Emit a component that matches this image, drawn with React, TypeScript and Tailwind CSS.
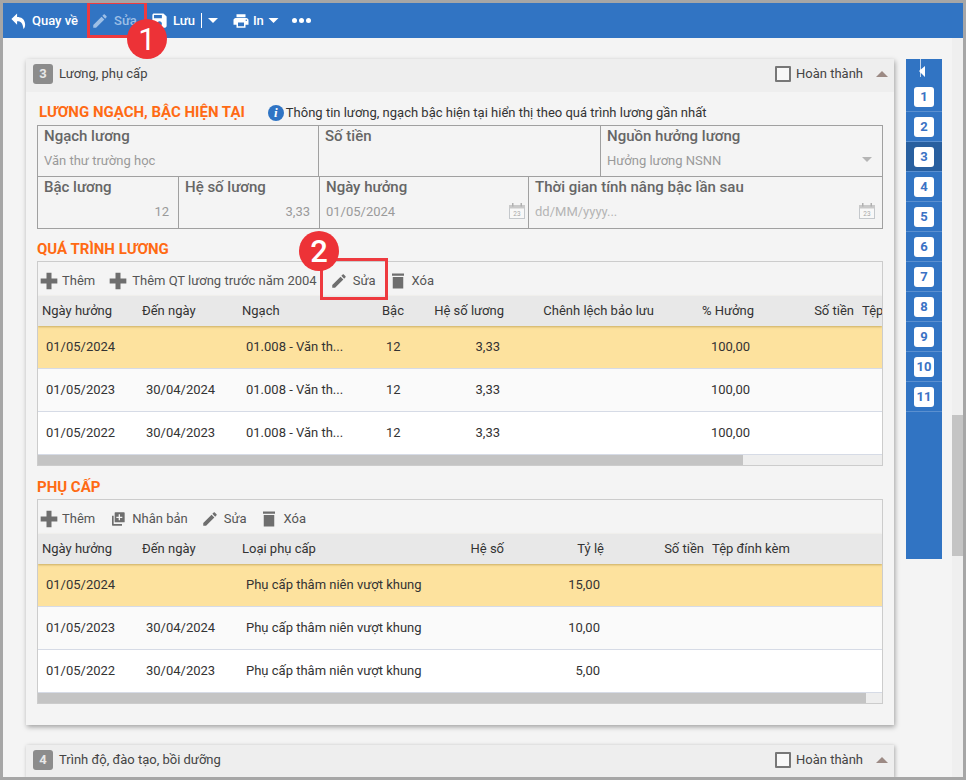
import React from "react";

const P = {
  back: "M10 2 2 10l8 8v-5c5 0 8 2 9 11 2-2 3-5 2-9-1-5-5-8-11-8z",
  pencil: "M3 17.25V21h3.75L17.81 9.94l-3.75-3.75L3 17.25zM20.71 7.04c.39-.39.39-1.02 0-1.41l-2.34-2.34c-.39-.39-1.02-.39-1.41 0l-1.83 1.83 3.75 3.75 1.83-1.83z",
  save: "M17 3H5c-1.11 0-2 .9-2 2v14c0 1.1.89 2 2 2h14c1.1 0 2-.9 2-2V7l-4-4zm-5 16c-1.66 0-3-1.34-3-3s1.34-3 3-3 3 1.34 3 3-1.34 3-3 3zm3-10H5V5h10v4z",
  print: "M19 8H5c-1.66 0-3 1.34-3 3v6h4v4h12v-4h4v-6c0-1.66-1.34-3-3-3zm-3 11H8v-5h8v5zm3-7c-.55 0-1-.45-1-1s.45-1 1-1 1 .45 1 1-.45 1-1 1zm-1-9H6v4h12V3z",
  plus: "M9 2h6v7h7v6h-7v7H9v-7H2V9h7z",
  trash: "M4 2h16v3H4zM5 6.500h14V22H5z",
  copy: "M8 2h13a1 1 0 0 1 1 1v13a1 1 0 0 1-1 1H8a1 1 0 0 1-1-1V3a1 1 0 0 1 1-1zm5 3v3.500H9.500v2H13V14h2v-3.500h3.500v-2H15V5zM3 7h2.500v12.500H18V22H4a1 1 0 0 1-1-1z",
};

function Icon({ d, className }: { d: string; className: string }) {
  return (
    <svg viewBox="0 0 24 24" className={className} fill="currentColor">
      <path d={d} />
    </svg>
  );
}

function Caret({ className }: { className: string }) {
  return (
    <svg viewBox="0 0 10 5" className={className} fill="currentColor">
      <path d="M0 0h10L5 5z" />
    </svg>
  );
}

function CalendarIcon({ className }: { className: string }) {
  return (
    <svg viewBox="0 0 16 16" className={className}>
      <rect x="0.500" y="2.500" width="15" height="13" fill="#f8f8f8" stroke="#c4c8cc" />
      <rect x="0" y="2" width="16" height="3.500" fill="#c9c9c9" />
      <rect x="3" y="0" width="1.500" height="3.500" fill="#b0b0b0" />
      <rect x="11.500" y="0" width="1.500" height="3.500" fill="#b0b0b0" />
      <text x="8" y="13" fontSize="6.500" textAnchor="middle" fill="#a8a8a8" fontFamily="Roboto, sans-serif">23</text>
    </svg>
  );
}

function Badge({ n, className }: { n: string; className: string }) {
  return (
    <div className={`absolute z-20 flex h-10 w-10 items-center justify-center rounded-full bg-[#ed3237] text-[31px] leading-none text-white ${className}`}>
      {n}
    </div>
  );
}

function SectionHeader({ n, title }: { n: string; title: string }) {
  return (
    <div className="flex h-[33px] shrink-0 items-center bg-[#eeeeee] pb-[3px] pl-[7px] pr-[6px]">
      <div className="flex h-5 w-5 items-center justify-center rounded-[3px] bg-[#8c8c8c] text-[13px] font-bold text-[#e8e8e8]">{n}</div>
      <span className="mb-[1px] ml-[6px] text-[13px] text-[#444444]">{title}</span>
      <div className="ml-auto flex items-center">
        <div className="h-4 w-4 rounded-[1px] border-2 border-[#777777] bg-[#f8f8f8]" />
        <span className="mb-[1px] ml-[5px] text-[13px] text-[#444444]">Hoàn thành</span>
        <Caret className="ml-[13px] h-[6px] w-3 rotate-180 text-[#9c8a84]" />
      </div>
    </div>
  );
}

function Field({ label, value, width, valueCls = "", right, children }: { label: string; value: string; width: string; valueCls?: string; right?: boolean; children?: React.ReactNode }) {
  return (
    <div className={`relative h-full border-r border-[#a0a0a0] px-[6px] pt-[1px] last:border-r-0 ${width}`}>
      <div className="text-[15px] font-medium leading-[18px] text-[#666666]">{label}</div>
      <div className={`mt-[7px] text-[13px] leading-[18px] text-[#9a9a9a] ${right ? "pr-[3px] text-right" : ""} ${valueCls}`}>{value}</div>
      {children}
    </div>
  );
}

function ToolItem({ d, label, iconCls = "h-[18px] w-[18px]", gap = "ml-[7px]", className = "" }: { d: string; label: string; iconCls?: string; gap?: string; className?: string }) {
  return (
    <div className={`flex items-center ${className}`}>
      <Icon d={d} className={`text-[#6e6e6e] ${iconCls}`} />
      <span className={`text-[13px] text-[#555555] ${gap}`}>{label}</span>
    </div>
  );
}

type Col = { label: string; right?: boolean };

function DataGrid({ cols, template, rows, thumb, toolbar }: { cols: Col[]; template: string; rows: string[][]; thumb: string; toolbar: React.ReactNode }) {
  return (
    <div className="w-[846px] overflow-hidden border border-[#cccccc]">
      <div className="flex h-[34px] items-center pt-[4px]">{toolbar}</div>
      <div className={`relative grid h-[30px] items-center bg-[#e8e8e8] shadow-[0_1px_2px_rgba(150,120,40,0.5)] ${template}`}>
        {cols.map((c) => (
          <div key={c.label} className={`whitespace-nowrap px-1 text-[13px] text-[#333333] ${c.right ? "text-right" : ""}`}>{c.label}</div>
        ))}
      </div>
      {rows.map((r, i) => (
        <div key={i} className={`grid h-[43px] items-center border-b border-[#d6dbe6] ${template} ${i === 0 ? "bg-[#fde29e]" : i === 1 ? "bg-[#fafafa]" : "bg-white"}`}>
          {r.map((v, j) => (
            <div key={j} className={`whitespace-nowrap px-2 text-[13px] text-[#333333] ${cols[j].right ? "text-right" : ""}`}>{v}</div>
          ))}
        </div>
      ))}
      <div className="h-[10px] bg-[#eeeeee]">
        <div className={`h-full bg-[#c4c4c4] ${thumb}`} />
      </div>
    </div>
  );
}

const salaryCols: Col[] = [
  { label: "Ngày hưởng" },
  { label: "Đến ngày" },
  { label: "Ngạch" },
  { label: "Bậc" },
  { label: "Hệ số lương", right: true },
  { label: "Chênh lệch bảo lưu", right: true },
  { label: "% Hưởng", right: true },
  { label: "Số tiền", right: true },
  { label: "Tệp đính kèm" },
];

const salaryRows = [
  ["01/05/2024", "", "01.008 - Văn th...", "12", "3,33", "", "100,00", "", ""],
  ["01/05/2023", "30/04/2024", "01.008 - Văn th...", "12", "3,33", "", "100,00", "", ""],
  ["01/05/2022", "30/04/2023", "01.008 - Văn th...", "12", "3,33", "", "100,00", "", ""],
];

const allowanceCols: Col[] = [
  { label: "Ngày hưởng" },
  { label: "Đến ngày" },
  { label: "Loại phụ cấp" },
  { label: "Hệ số", right: true },
  { label: "Tỷ lệ", right: true },
  { label: "Số tiền", right: true },
  { label: "Tệp đính kèm" },
];

const allowanceRows = [
  ["01/05/2024", "", "Phụ cấp thâm niên vượt khung", "", "15,00", "", ""],
  ["01/05/2023", "30/04/2024", "Phụ cấp thâm niên vượt khung", "", "10,00", "", ""],
  ["01/05/2022", "30/04/2023", "Phụ cấp thâm niên vượt khung", "", "5,00", "", ""],
];

const navItems = ["1", "2", "3", "4", "5", "6", "7", "8", "9", "10", "11"];

export default function App() {
  return (
    <div className="relative flex h-[780px] w-[966px] flex-col overflow-hidden border-[3px] border-[#a6a6a6] bg-[#f4f4f4] font-['Roboto',sans-serif]">
      {/* toolbar */}
      <div className="flex h-[35px] shrink-0 items-center bg-[#3174c3] pl-[7px] text-[13px] font-medium text-white">
        <Icon d={P.back} className="h-[17px] w-[17px]" />
        <span className="ml-[5px]">Quay về</span>
        <Icon d={P.pencil} className="ml-[13px] h-[18px] w-[18px] text-[#9dbfe6]" />
        <span className="ml-[5px] text-[#9dbfe6]">Sửa</span>
        <Icon d={P.save} className="ml-[13px] h-[19px] w-[19px]" />
        <span className="ml-[4px]">Lưu</span>
        <div className="ml-[6px] h-[15px] w-px bg-white" />
        <Caret className="ml-[6px] h-[5px] w-[10px]" />
        <Icon d={P.print} className="ml-[14px] h-[18px] w-[18px]" />
        <span className="ml-[3px]">In</span>
        <Caret className="ml-[4px] h-[5px] w-[11px]" />
        <div className="ml-[13px] flex gap-[2px]">
          <div className="h-[5px] w-[5px] rounded-full bg-white" />
          <div className="h-[5px] w-[5px] rounded-full bg-white" />
          <div className="h-[5px] w-[5px] rounded-full bg-white" />
        </div>
      </div>

      {/* callouts */}
      <div className="absolute left-[84px] top-[-2px] z-10 h-[37px] w-[60px] border-[3px] border-[#ee3a3f]" />
      <Badge n="1" className="left-[124px] top-[16px]" />
      <div className="absolute left-[317px] top-[255px] z-10 h-[42px] w-[68px] border-[3px] border-[#ee3a3f]" />
      <Badge n="2" className="left-[296px] top-[228px] font-medium" />

      <div className="flex min-h-0 flex-1">
        {/* content */}
        <div className="w-[891px] shrink-0 pl-[23px] pt-[21px]">
          <div className="w-[868px] bg-[#f4f4f4] shadow-[1px_2px_5px_rgba(0,0,0,0.35)]">
            <SectionHeader n="3" title="Lương, phụ cấp" />
            <div className="pb-[21px] pl-[11px]">
              <div className="flex h-[33px] items-center pl-[2px] pt-[8px]">
                <h2 className="text-[15px] font-bold text-[#ff6a13]">LƯƠNG NGẠCH, BẬC HIỆN TẠI</h2>
                <div className="ml-[23px] flex h-4 w-4 items-center justify-center rounded-full bg-[#2f74c4] font-['Liberation_Serif',serif] text-[13px] font-bold italic text-white">i</div>
                <span className="ml-[2px] text-[13px] text-[#333333]">Thông tin lương, ngạch bậc hiện tại hiển thị theo quá trình lương gần nhất</span>
              </div>

              <div className="w-[846px] border border-[#a0a0a0]">
                <div className="flex h-[51px] border-b border-[#a0a0a0]">
                  <Field label="Ngạch lương" value="Văn thư trường học" width="w-[281px]" />
                  <Field label="Số tiền" value="" width="w-[282px]" />
                  <Field label="Nguồn hưởng lương" value="Hưởng lương NSNN" width="flex-1">
                    <Caret className="absolute right-[10px] top-[31px] h-[5px] w-[10px] text-[#b5b5b5]" />
                  </Field>
                </div>
                <div className="flex h-[51px]">
                  <Field label="Bậc lương" value="12" width="w-[141px]" right />
                  <Field label="Hệ số lương" value="3,33" width="w-[141px]" right />
                  <Field label="Ngày hưởng" value="01/05/2024" width="w-[209px]">
                    <CalendarIcon className="absolute right-[3px] top-[26px] h-4 w-4" />
                  </Field>
                  <Field label="Thời gian tính nâng bậc lần sau" value="dd/MM/yyyy..." width="flex-1" valueCls="text-[#b4b4b4]">
                    <CalendarIcon className="absolute right-[7px] top-[26px] h-4 w-4" />
                  </Field>
                </div>
              </div>

              <h2 className="flex h-[32px] items-center pt-[8px] text-[15px] font-bold text-[#ff6a13]">QUÁ TRÌNH LƯƠNG</h2>
              <DataGrid
                cols={salaryCols}
                template="grid-cols-[100px_100px_140px_50px_80px_150px_100px_100px_100px]"
                rows={salaryRows}
                thumb="w-[705px]"
                toolbar={
                  <>
                    <ToolItem d={P.plus} label="Thêm" className="ml-[1px]" iconCls="h-[20px] w-[20px]" gap="ml-[3px]" />
                    <ToolItem d={P.plus} label="Thêm QT lương trước năm 2004" className="ml-[13px]" iconCls="h-[20px] w-[20px]" gap="ml-[4px]" />
                    <ToolItem d={P.pencil} label="Sửa" className="ml-[13px]" gap="ml-[5px]" />
                    <ToolItem d={P.trash} label="Xóa" className="ml-[13px]" gap="ml-[5px]" />
                  </>
                }
              />

              <h2 className="flex h-[33px] items-center pt-[9px] text-[15px] font-bold text-[#ff6a13]">PHỤ CẤP</h2>
              <DataGrid
                cols={allowanceCols}
                template="grid-cols-[100px_100px_170px_100px_100px_100px_100px]"
                rows={allowanceRows}
                thumb="w-[828px]"
                toolbar={
                  <>
                    <ToolItem d={P.plus} label="Thêm" className="ml-[1px]" iconCls="h-[20px] w-[20px]" gap="ml-[3px]" />
                    <ToolItem d={P.copy} label="Nhân bản" className="ml-[15px]" iconCls="h-[16px] w-[16px]" gap="ml-[6px]" />
                    <ToolItem d={P.pencil} label="Sửa" className="ml-[13px]" gap="ml-[5px]" />
                    <ToolItem d={P.trash} label="Xóa" className="ml-[13px]" gap="ml-[6px]" />
                  </>
                }
              />
            </div>
          </div>

          <div className="mt-5 w-[868px] shadow-[1px_1px_4px_rgba(0,0,0,0.3)]">
            <SectionHeader n="4" title="Trình độ, đào tạo, bồi dưỡng" />
          </div>
        </div>

        {/* section nav */}
        <div className="ml-3 mt-[21px] h-[500px] w-9 shrink-0 bg-[#3174c3]">
          <div className="flex h-[23px] items-start justify-center">
            <svg viewBox="0 0 8 18" className="mr-[2px] h-[18px] w-2 text-white" fill="currentColor">
              <path d="M1 0h.7v18H1zM0 12l6-5v11z" />
            </svg>
          </div>
          {navItems.map((n) => (
            <div key={n} className={`flex h-[30px] items-center justify-center border-b border-[#5b90d0] ${n === "3" ? "bg-[#285f9f]" : ""}`}>
              <div className="flex h-5 w-5 items-center justify-center rounded-[3px] bg-white text-[13px] font-bold text-[#3a72c4]">{n}</div>
            </div>
          ))}
        </div>

        {/* page scrollbar */}
        <div className="ml-[10px] w-[11px] shrink-0 bg-[#efefef] pt-[377px]">
          <div className="h-[141px] bg-[#c4c4c4]" />
        </div>
      </div>
    </div>
  );
}
